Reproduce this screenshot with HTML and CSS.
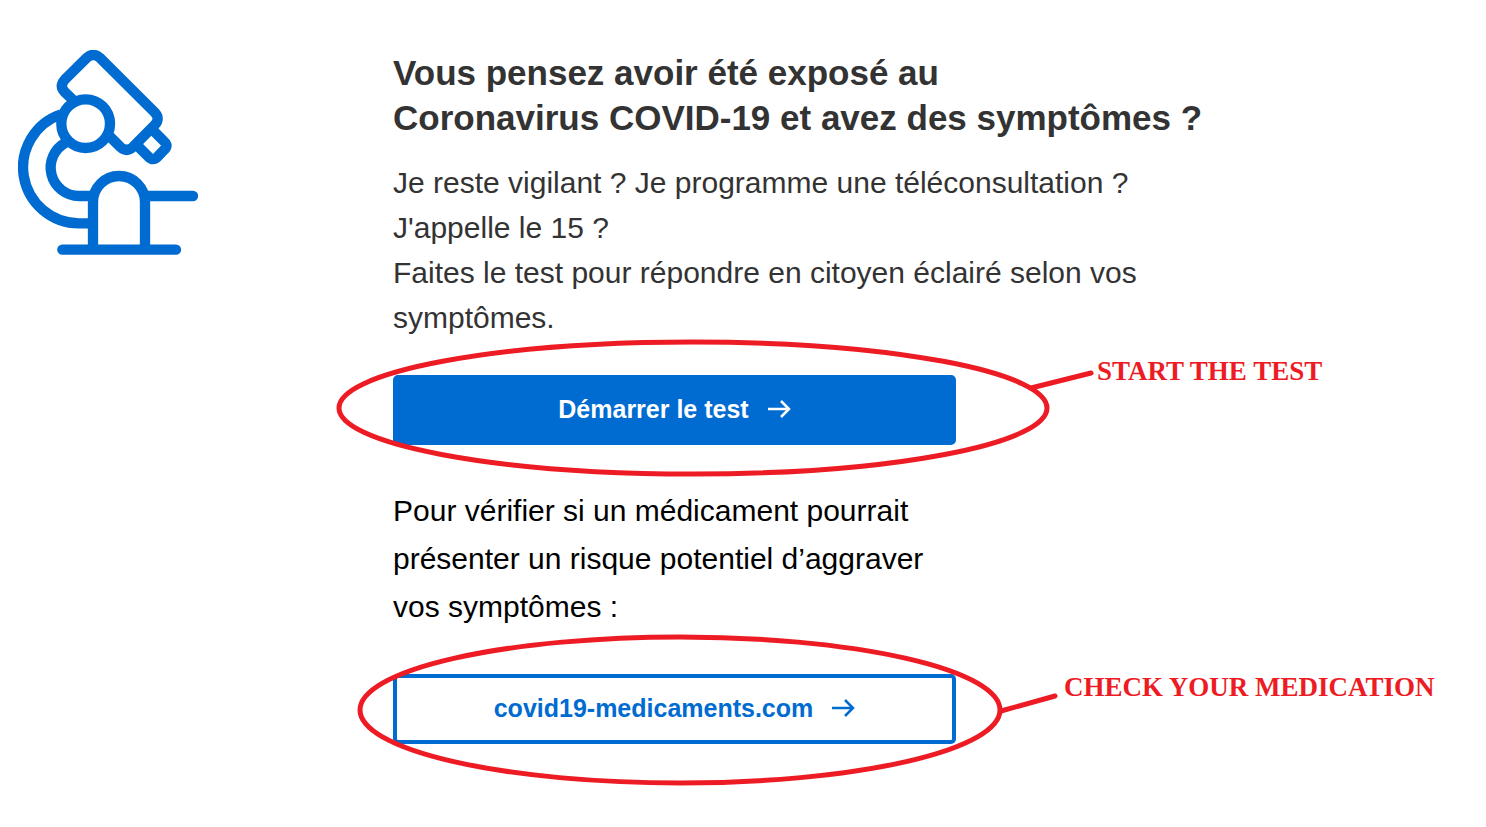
FILE: index.html
```html
<!DOCTYPE html>
<html lang="fr">
<head>
    <meta charset="UTF-8">
    <meta name="viewport" content="width=device-width, initial-scale=1.0">
    <title>Test Coronavirus COVID-19</title>
    <link rel="stylesheet" href="styles.css">
</head>
<body>

    <main class="test-section">
        <!-- Microscope -->
        <div class="icon-container">
            <svg class="microscope" viewBox="54 30 540 615" aria-hidden="true">
                <path d="M220 181 L195 157 Q177 138 195 118 L261 53 Q280 37 299 53 L464 217 Q482 236 464 255 L399 321 Q380 338 361 321 L328 288"/>
                <circle cx="257" cy="251" r="73"/>
                <path d="M463 275 L492 304 Q507 317 492 330 L473 350 Q459 365 445 350 L416 321"/>
                <path d="M183 223 A168 168 0 0 0 237 550 H275"/>
                <path d="M197 308 A85 85 0 0 0 237 468 H275"/>
                <path d="M279 628 V486 A78 78 0 0 1 435 486 V628"/>
                <path class="round" d="M440 468 H579 M187 629 H528"/>
            </svg>
        </div>

        <div class="text-container">
            <h1>Vous pensez avoir été exposé au<br>Coronavirus COVID-19 et avez des symptômes ?</h1>
            <p class="intro">Je reste vigilant ? Je programme une téléconsultation ? J'appelle le 15 ?<br>Faites le test pour répondre en citoyen éclairé selon vos symptômes.</p>

            <div class="action">
                <button type="button" class="btn btn-primary">
                    Démarrer le test
                    <svg class="arrow" viewBox="0 0 24 20" aria-hidden="true"><path d="M1 10 H22 M14 2 L22 10 L14 18"/></svg>
                </button>
                <svg class="mark mark-test" viewBox="0 0 760 138" aria-hidden="true">
                    <ellipse cx="357" cy="69" rx="354" ry="66"/>
                    <path d="M695 49 L755 34"/>
                </svg>
                <span class="note note-test" lang="en">START THE TEST</span>
            </div>

            <p class="check">Pour vérifier si un médicament pourrait présenter un risque potentiel d’aggraver vos symptômes :</p>

            <div class="action">
                <a href="#" class="btn btn-outline">
                    covid19-medicaments.com
                    <svg class="arrow" viewBox="0 0 24 20" aria-hidden="true"><path d="M1 10 H22 M14 2 L22 10 L14 18"/></svg>
                </a>
                <svg class="mark mark-check" viewBox="0 0 700 152" aria-hidden="true">
                    <ellipse cx="322" cy="76" rx="320" ry="73"/>
                    <path d="M643 77 L697 62"/>
                </svg>
                <span class="note note-check" lang="en">CHECK YOUR MEDICATION</span>
            </div>
        </div>
    </main>

</body>
</html>
```
FILE: styles.css
```css
/* General Styles */
* {
    box-sizing: border-box;
}
body {
    margin: 0;
    font-family: "Liberation Sans", Arial, sans-serif;
    font-size: 30px;
    color: #333;
    background-color: #fff;
}

/* Layout */
.test-section {
    display: grid;
    grid-template-columns: 375px 1fr;
    padding: 50px 18px 60px;
}
.microscope {
    display: block;
    width: 180px;
    height: 205px;
    fill: none;
    stroke: #006bd0;
    stroke-width: 31;
}
.microscope .round {
    stroke-linecap: round;
}

/* Texts */
h1 {
    margin: 0 0 20px;
    font-size: 35px;
    line-height: 45px;
}
p {
    margin: 0;
}
.intro {
    max-width: 760px;
    margin-bottom: 35px;
    line-height: 45px;
}
.check {
    max-width: 563px;
    margin: 42px 0 43px;
    line-height: 48px;
    color: #000;
}

/* Buttons */
.action {
    position: relative;
    max-width: 563px;
}
.btn {
    display: flex;
    justify-content: center;
    align-items: center;
    gap: 18px;
    width: 100%;
    height: 70px;
    padding: 0 0 2px;
    border: 4px solid #006bd0;
    border-radius: 5px;
    font-family: inherit;
    font-size: 25px;
    font-weight: bold;
    text-decoration: none;
    cursor: pointer;
}
.btn-primary {
    background-color: #006bd0;
    color: #fff;
}
.btn-outline {
    background-color: #fff;
    color: #006bd0;
}
.arrow {
    width: 24px;
    height: 20px;
    fill: none;
    stroke: currentColor;
    stroke-width: 2.5;
}

/* Red marks over the buttons */
.mark {
    position: absolute;
    overflow: visible;
    fill: none;
    stroke: #ed1c24;
    stroke-width: 5;
    stroke-linecap: round;
    pointer-events: none;
}
.mark-test {
    left: -57px;
    top: -36px;
    width: 760px;
    height: 138px;
}
.mark-check {
    left: -35px;
    top: -40px;
    width: 700px;
    height: 152px;
}
.note {
    position: absolute;
    font-family: "Liberation Serif", "Times New Roman", serif;
    font-size: 27px;
    font-weight: bold;
    line-height: 30px;
    color: #ed1c24;
    white-space: nowrap;
}
.note-test {
    left: 704px;
    top: -19px;
}
.note-check {
    left: 671px;
    top: -2px;
}
```
